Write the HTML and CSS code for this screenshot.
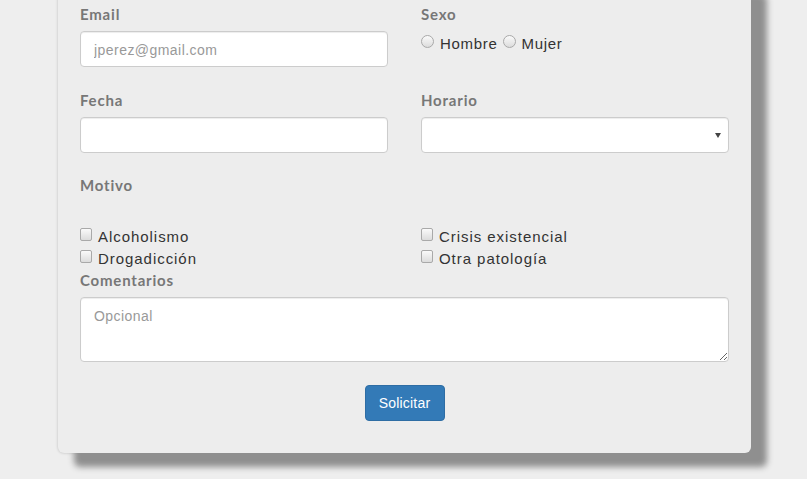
FILE: index.html
```html
<!DOCTYPE html>
<html lang="es">
<head>
<meta charset="utf-8">
<title>Solicitud</title>
<link rel="stylesheet" href="styles.css">
</head>
<body>
<form class="card">
  <div class="row row-a">
    <div class="group">
      <label class="lbl" for="email">Email</label>
      <input class="control" id="email" type="text" placeholder="jperez@gmail.com">
    </div>
    <div class="group">
      <span class="lbl">Sexo</span>
      <div class="radios">
        <label class="opt"><span class="radio"></span>Hombre</label>
        <label class="opt"><span class="radio"></span>Mujer</label>
      </div>
    </div>
  </div>
  <div class="row row-b">
    <div class="group">
      <label class="lbl" for="fecha">Fecha</label>
      <input class="control" id="fecha" type="text">
    </div>
    <div class="group">
      <label class="lbl" for="horario">Horario</label>
      <div class="select-wrap">
        <div class="control" id="horario"></div>
      </div>
    </div>
  </div>
  <div class="motivo">
    <span class="lbl">Motivo</span>
  </div>
  <div class="checks">
    <label class="chk"><span class="box"></span>Alcoholismo</label>
    <label class="chk"><span class="box"></span>Crisis existencial</label>
    <label class="chk"><span class="box"></span>Drogadicción</label>
    <label class="chk"><span class="box"></span>Otra patología</label>
  </div>
  <div class="coments">
    <label class="lbl" for="com">Comentarios</label>
    <textarea class="control area" id="com" placeholder="Opcional"></textarea>
  </div>
  <div class="actions">
    <button class="btn" type="button">Solicitar</button>
  </div>
</form>
</body>
</html>
```

FILE: styles.css
```css
html, body {
  margin: 0;
  padding: 0;
  background: #eeeeee;
}
body {
  min-height: 479px;
  font-family: "Liberation Sans", Arial, sans-serif;
  color: #333;
  overflow: hidden;
}
.card {
  box-sizing: border-box;
  width: 693px;
  margin-top: -20px;
  margin-left: 58px;
  padding: 24px 22px 32px;
  background: #ededed;
  border-radius: 6px;
  box-shadow: 16px 14px 6px #8f8f8f, 0 0 3px rgba(0, 0, 0, 0.22);
}
.row {
  display: grid;
  grid-template-columns: 308px 308px;
  column-gap: 33px;
}
.row-b {
  margin-top: 23px;
}
.group {
  display: flex;
  flex-direction: column;
}
.lbl {
  display: block;
  font-family: Lato, "Liberation Sans", sans-serif;
  font-weight: 700;
  font-size: 15px;
  line-height: 20px;
  letter-spacing: 0.8px;
  color: #777;
  margin-bottom: 7px;
}
.control {
  box-sizing: border-box;
  display: block;
  width: 100%;
  height: 36px;
  margin: 0;
  padding: 7px 13px 5px;
  font-family: "Liberation Sans", Arial, sans-serif;
  font-size: 14px;
  line-height: 20px;
  color: #555;
  background: #fff;
  border: 1px solid #ccc;
  border-radius: 4px;
  box-shadow: inset 0 1px 1px rgba(0, 0, 0, 0.075);
  outline: none;
}
.control::placeholder {
  color: #999;
  letter-spacing: 0.45px;
}
.radios {
  display: flex;
  margin-top: 3px;
  font-size: 15px;
  line-height: 20px;
  letter-spacing: 0.7px;
}
.opt {
  display: flex;
  align-items: flex-start;
  margin-right: 5px;
}
.radio {
  box-sizing: border-box;
  width: 13px;
  height: 13px;
  margin-top: 1px;
  margin-right: 6px;
  border: 1px solid #a9a9a9;
  border-radius: 50%;
  background: linear-gradient(#fafafa, #dcdcdc);
}
.select-wrap {
  position: relative;
}
.select-wrap::after {
  content: "";
  position: absolute;
  right: 8px;
  top: 16px;
  border-left: 3px solid transparent;
  border-right: 3px solid transparent;
  border-top: 5px solid #444;
}
.motivo {
  margin-top: 22px;
}
.motivo .lbl {
  margin-bottom: 0;
}
.checks {
  display: grid;
  grid-template-columns: 308px 308px;
  column-gap: 33px;
  margin-top: 31px;
  font-size: 15px;
  line-height: 22px;
  letter-spacing: 0.95px;
}
.chk {
  display: flex;
  align-items: flex-start;
}
.box {
  box-sizing: border-box;
  width: 12px;
  height: 13px;
  margin-top: 2px;
  margin-right: 6px;
  border: 1px solid #a9a9a9;
  border-radius: 2px;
  background: linear-gradient(#fafafa, #dcdcdc);
}
.area {
  height: 65px;
  padding-top: 8px;
  resize: vertical;
}
.actions {
  display: flex;
  justify-content: center;
  margin-top: 23px;
}
.btn {
  box-sizing: border-box;
  width: 80px;
  height: 36px;
  padding: 0;
  font-family: "Liberation Sans", Arial, sans-serif;
  font-size: 14px;
  letter-spacing: 0.2px;
  color: #fff;
  background: #337ab7;
  border: 1px solid #2e6da4;
  border-radius: 4px;
}
```
